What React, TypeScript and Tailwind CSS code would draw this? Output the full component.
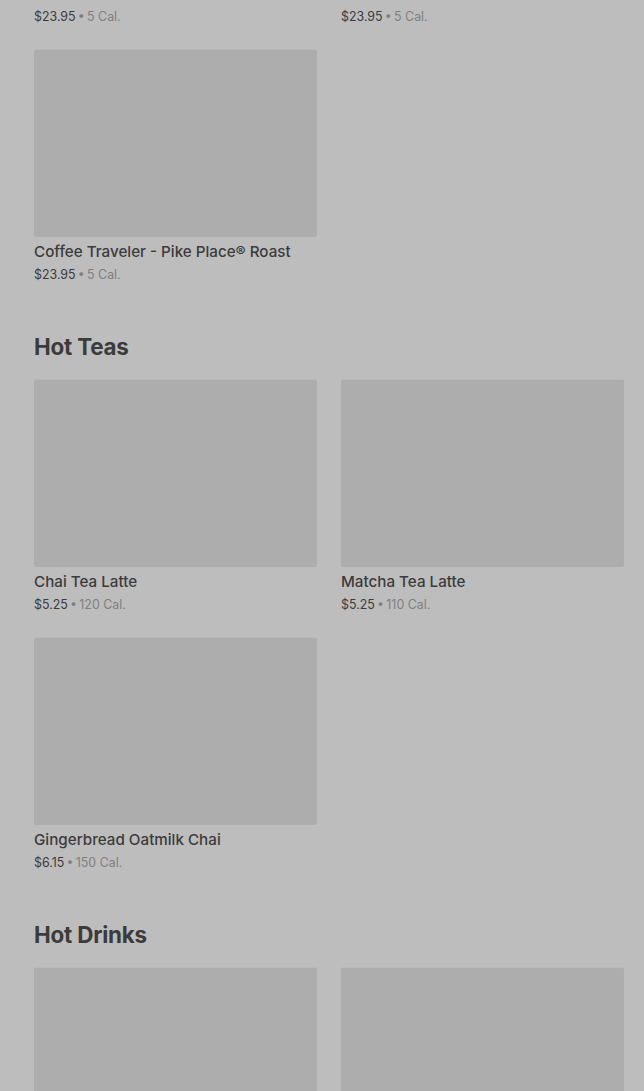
const SECTIONS = [
  {
    title: "",
    items: [
      { name: "Coffee Traveler - Blonde Roast", price: "$23.95", cal: "5 Cal." },
      { name: "Coffee Traveler - Dark Roast", price: "$23.95", cal: "5 Cal." },
      { name: "Coffee Traveler - Pike Place® Roast", price: "$23.95", cal: "5 Cal." },
    ],
  },
  {
    title: "Hot Teas",
    items: [
      { name: "Chai Tea Latte", price: "$5.25", cal: "120 Cal." },
      { name: "Matcha Tea Latte", price: "$5.25", cal: "110 Cal." },
      { name: "Gingerbread Oatmilk Chai", price: "$6.15", cal: "150 Cal." },
    ],
  },
  {
    title: "Hot Drinks",
    items: [
      { name: "Hot Chocolate", price: "$4.45", cal: "370 Cal." },
      { name: "Steamed Milk", price: "$3.75", cal: "190 Cal." },
    ],
  },
];

function ProductCard({ name, price, cal }: { name: string; price: string; cal: string }) {
  return (
    <div className="flex flex-col">
      <div className="h-[187px] w-full rounded-[2px] bg-[#adadad] shadow-[0_-1px_0_#b8b8b8]" />
      <p className="mt-[4px] text-[15.2px] leading-[22px] font-medium text-[#3b3b3b]">
        {name}
      </p>
      <p className="mt-[3px] text-[12.4px] leading-[18px]">
        <span className="text-[#3b3b3b]">{price}</span>
        <span className="text-[#808080]">{"\u2009•\u2009"}{cal}</span>
      </p>
    </div>
  );
}

export default function App() {
  return (
    <div
      className="h-[1091px] overflow-hidden bg-[#bdbdbd]"
      style={{ fontFamily: "Inter, 'Noto Sans', sans-serif" }}
    >
      <div className="-mt-[208px] pl-[34px] pr-[20px]">
        {SECTIONS.map((s, i) => (
          <section key={i} className={i > 0 ? "mt-[47px]" : ""}>
            {s.title && (
              <h2 className="mb-[17px] text-[22.4px] leading-[32px] font-bold text-[#3b3b3b] tracking-[-0.2px]">
                {s.title}
              </h2>
            )}
            <div className="grid grid-cols-2 gap-x-[24px] gap-y-[24px]">
              {s.items.map((item) => (
                <ProductCard key={item.name} {...item} />
              ))}
            </div>
          </section>
        ))}
      </div>
    </div>
  );
}
